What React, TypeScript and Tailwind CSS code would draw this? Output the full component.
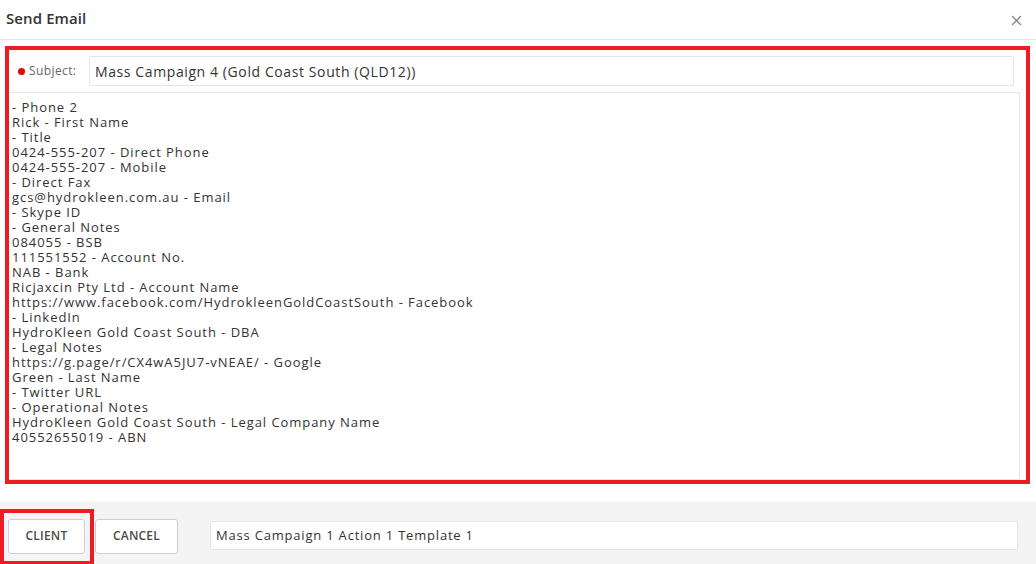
const bodyLines = [
  '- Phone 2',
  'Rick - First Name',
  '- Title',
  '0424-555-207 - Direct Phone',
  '0424-555-207 - Mobile',
  '- Direct Fax',
  'gcs@hydrokleen.com.au - Email',
  '- Skype ID',
  '- General Notes',
  '084055 - BSB',
  '111551552 - Account No.',
  'NAB - Bank',
  'Ricjaxcin Pty Ltd - Account Name',
  'https://www.facebook.com/HydrokleenGoldCoastSouth - Facebook',
  '- LinkedIn',
  'HydroKleen Gold Coast South - DBA',
  '- Legal Notes',
  'https://g.page/r/CX4wA5JU7-vNEAE/ - Google',
  'Green - Last Name',
  '- Twitter URL',
  '- Operational Notes',
  'HydroKleen Gold Coast South - Legal Company Name',
  '40552655019 - ABN',
];

export default function App() {
  return (
    <div className="w-[1036px] h-[564px] bg-white text-[#333] flex flex-col overflow-hidden"
      style={{ fontFamily: '"Open Sans", "Liberation Sans", sans-serif' }}>
      {/* header */}
      <div className="h-[40px] shrink-0 border-b border-[#e5e5e5] flex items-start justify-between pl-[6px] pr-[13px] pt-[8px]">
        <h1 className="text-[15px] font-semibold text-[#333] tracking-[0.1px] leading-[20px]">Send Email</h1>
        <button className="w-[14px] h-[14px] mt-[5px] text-[#888] flex items-center justify-center">
          <svg width="11" height="11" viewBox="0 0 11 11" fill="none" stroke="currentColor" strokeWidth="1.3">
            <path d="M1 1L10 10M10 1L1 10" />
          </svg>
        </button>
      </div>

      {/* body */}
      <div className="flex-1 pt-[6px] pl-[5px] pr-[6px] pb-[18px]">
        <div className="h-[438px] border-[4px] border-[#ed1c24] flex flex-col pt-[6px] pr-[6px]">
          <div className="flex items-center h-[30px] pl-[9px] pr-[6px]">
            <span className="w-[7px] h-[7px] rounded-full bg-[#e00] mr-[4px]" />
            <label className="text-[12px] text-[#666] tracking-[0.4px] w-[60px]">Subject:</label>
            <input
              readOnly
              value="Mass Campaign 4 (Gold Coast South (QLD12))"
              className="flex-1 h-[30px] border border-[#e6e6e6] rounded-[2px] px-[5px] text-[14px] text-[#333] tracking-[0.6px] outline-none"
            />
          </div>
          <div className="flex-1 mt-[6px] border border-[#e6e6e6] border-l-0 pl-[3px] pt-[7px] text-[13px] leading-[15px] tracking-[0.95px] text-[#333] overflow-hidden">
            {bodyLines.map((l, i) => (
              <div key={i}>{l}</div>
            ))}
          </div>
        </div>
      </div>

      {/* footer */}
      <div className="h-[62px] shrink-0 bg-[#f4f4f4] flex items-center relative">
        <div className="absolute left-0 top-[7px] w-[94px] h-[56px] border-[4px] border-[#ed1c24]" />
        <div className="flex items-center gap-[10px] pl-[8px] mt-[6px]">
          <button className="w-[77px] h-[35px] bg-white border border-[#ccd] rounded-[3px] text-[12px] font-semibold text-[#4a4a4a] tracking-[0.2px]">
            CLIENT
          </button>
          <button className="w-[83px] h-[35px] bg-white border border-[#ccd] rounded-[3px] text-[12px] font-semibold text-[#4a4a4a] tracking-[0.2px]">
            CANCEL
          </button>
        </div>
        <input
          readOnly
          value="Mass Campaign 1 Action 1 Template 1"
          className="ml-[32px] mt-[4px] w-[808px] h-[29px] bg-white border border-[#e6e6e6] rounded-[2px] px-[5px] text-[13px] tracking-[0.8px] text-[#333] outline-none"
        />
      </div>
    </div>
  );
}
